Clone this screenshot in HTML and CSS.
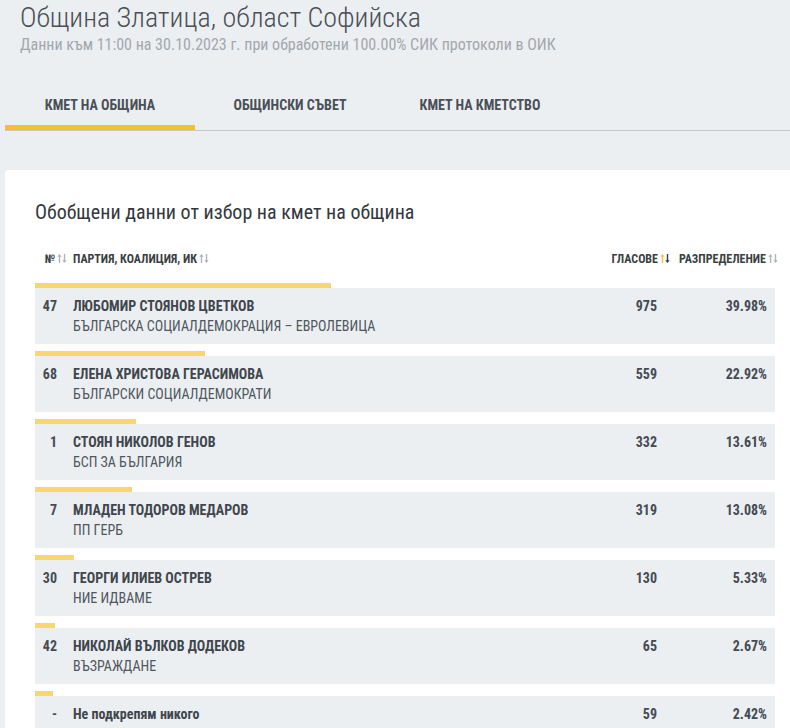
FILE: index.html
```html
<!DOCTYPE html>
<html lang="bg">
<head>
<meta charset="utf-8">
<title>Община Златица</title>
<link rel="stylesheet" href="styles.css">
</head>
<body>
<header class="page-head">
  <h1 class="title">Община Златица, област Софийска</h1>
  <div class="subtitle">Данни към 11:00 на 30.10.2023 г. при обработени 100.00% СИК протоколи в ОИК</div>
</header>
<nav class="tabs">
  <div class="tab active">КМЕТ НА ОБЩИНА</div>
  <div class="tab">ОБЩИНСКИ СЪВЕТ</div>
  <div class="tab">КМЕТ НА КМЕТСТВО</div>
</nav>
<main class="card">
  <h2 class="card-title">Обобщени данни от избор на кмет на община</h2>
  <div class="table">
    <div class="thead">
      <div class="th th-num">№<svg class="sort" viewBox="0 0 10 10"><path d="M2.5 0.5 L0.3 3.3 H1.8 V9.5 H3.2 V3.3 H4.7 Z" fill="#b0b4b8"/><path d="M7.5 9.5 L5.3 6.7 H6.8 V0.5 H8.2 V6.7 H9.7 Z" fill="#b0b4b8"/></svg></div>
      <div class="th th-name">ПАРТИЯ, КОАЛИЦИЯ, ИК<svg class="sort" viewBox="0 0 10 10"><path d="M2.5 0.5 L0.3 3.3 H1.8 V9.5 H3.2 V3.3 H4.7 Z" fill="#b0b4b8"/><path d="M7.5 9.5 L5.3 6.7 H6.8 V0.5 H8.2 V6.7 H9.7 Z" fill="#b0b4b8"/></svg></div>
      <div class="th th-votes">ГЛАСОВЕ<svg class="sort" viewBox="0 0 10 10"><path d="M2.5 0.5 L0.3 3.3 H1.8 V9.5 H3.2 V3.3 H4.7 Z" fill="#f2c43c"/><path d="M7.5 9.5 L5.3 6.7 H6.8 V0.5 H8.2 V6.7 H9.7 Z" fill="#3a3f44"/></svg></div>
      <div class="th th-pct">РАЗПРЕДЕЛЕНИЕ<svg class="sort" viewBox="0 0 10 10"><path d="M2.5 0.5 L0.3 3.3 H1.8 V9.5 H3.2 V3.3 H4.7 Z" fill="#b0b4b8"/><path d="M7.5 9.5 L5.3 6.7 H6.8 V0.5 H8.2 V6.7 H9.7 Z" fill="#b0b4b8"/></svg></div>
    </div>

    <div class="entry">
      <div class="bar" style="width:39.98%"></div>
      <div class="row">
        <div class="num">47</div>
        <div class="who"><div class="name">ЛЮБОМИР СТОЯНОВ ЦВЕТКОВ</div><div class="party">БЪЛГАРСКА СОЦИАЛДЕМОКРАЦИЯ – ЕВРОЛЕВИЦА</div></div>
        <div class="votes">975</div>
        <div class="pct">39.98%</div>
      </div>
    </div>

    <div class="entry">
      <div class="bar" style="width:22.92%"></div>
      <div class="row">
        <div class="num">68</div>
        <div class="who"><div class="name">ЕЛЕНА ХРИСТОВА ГЕРАСИМОВА</div><div class="party">БЪЛГАРСКИ СОЦИАЛДЕМОКРАТИ</div></div>
        <div class="votes">559</div>
        <div class="pct">22.92%</div>
      </div>
    </div>

    <div class="entry">
      <div class="bar" style="width:13.61%"></div>
      <div class="row">
        <div class="num">1</div>
        <div class="who"><div class="name">СТОЯН НИКОЛОВ ГЕНОВ</div><div class="party">БСП ЗА БЪЛГАРИЯ</div></div>
        <div class="votes">332</div>
        <div class="pct">13.61%</div>
      </div>
    </div>

    <div class="entry">
      <div class="bar" style="width:13.08%"></div>
      <div class="row">
        <div class="num">7</div>
        <div class="who"><div class="name">МЛАДЕН ТОДОРОВ МЕДАРОВ</div><div class="party">ПП ГЕРБ</div></div>
        <div class="votes">319</div>
        <div class="pct">13.08%</div>
      </div>
    </div>

    <div class="entry">
      <div class="bar" style="width:5.33%"></div>
      <div class="row">
        <div class="num">30</div>
        <div class="who"><div class="name">ГЕОРГИ ИЛИЕВ ОСТРЕВ</div><div class="party">НИЕ ИДВАМЕ</div></div>
        <div class="votes">130</div>
        <div class="pct">5.33%</div>
      </div>
    </div>

    <div class="entry">
      <div class="bar" style="width:2.67%"></div>
      <div class="row">
        <div class="num">42</div>
        <div class="who"><div class="name">НИКОЛАЙ ВЪЛКОВ ДОДЕКОВ</div><div class="party">ВЪЗРАЖДАНЕ</div></div>
        <div class="votes">65</div>
        <div class="pct">2.67%</div>
      </div>
    </div>

    <div class="entry">
      <div class="bar" style="width:2.42%"></div>
      <div class="row">
        <div class="num">-</div>
        <div class="who"><div class="name">Не подкрепям никого</div><div class="party">&nbsp;</div></div>
        <div class="votes">59</div>
        <div class="pct">2.42%</div>
      </div>
    </div>
  </div>
</main>
</body>
</html>
```

FILE: styles.css
```css
* { box-sizing: border-box; }

html, body {
  margin: 0;
  padding: 0;
}

body {
  background: #eceff2;
  font-family: "Roboto Condensed", "Liberation Sans Narrow", Roboto, sans-serif;
  color: #444b52;
  overflow: hidden;
}

.page-head {
  padding: 1px 20px 0 20px;
}

.title {
  margin: 0;
  font-size: 28px;
  font-weight: 300;
  line-height: 34px;
  color: #4a4f55;
}

.subtitle {
  font-size: 16px;
  line-height: 20px;
  color: #a2a7ac;
}

.tabs {
  display: flex;
  margin: 24px 0 0 5px;
  border-bottom: 1px solid #c6cacf;
}

.tab {
  width: 190px;
  height: 51px;
  padding-top: 18px;
  text-align: center;
  font-size: 14px;
  font-weight: 700;
  color: #4a5057;
}

.tab.active {
  border-bottom: 5px solid #f2c12e;
}

.card {
  margin: 39px 0 0 5px;
  background: #ffffff;
  border-radius: 4px 0 0 0;
  padding: 29px 15px 0 30px;
  min-height: 600px;
}

.card-title {
  margin: 0;
  font-size: 20px;
  font-weight: 400;
  line-height: 26px;
  color: #33383d;
}

.table {
  margin-top: 27px;
}

.thead {
  display: grid;
  grid-template-columns: 30px 1fr 100px 110px;
  font-size: 12px;
  font-weight: 700;
  line-height: 14px;
  color: #3a3f44;
  margin-bottom: 17px;
}

.th {
  display: flex;
  align-items: center;
}

.th-num { justify-content: flex-end; margin-right: -2px; }
.th-name { padding-left: 8px; }
.th-votes { justify-content: flex-end; margin-right: -5px; }
.th-pct { justify-content: flex-end; margin-right: -3px; }

.sort {
  width: 10px;
  height: 11px;
  margin-left: 2px;
  margin-top: -2px;
}

.entry {
  margin-bottom: 7px;
}

.bar {
  height: 5px;
  background: #f7d86f;
}

.row {
  display: grid;
  grid-template-columns: 30px 1fr 100px 110px;
  align-items: start;
  background: #eceff2;
  height: 56px;
  padding-top: 8px;
  font-size: 14px;
  line-height: 20px;
}

.num {
  text-align: right;
  padding-right: 8px;
  font-weight: 700;
}

.who {
  padding-left: 8px;
}

.name {
  font-weight: 700;
  color: #3f464d;
}

.party {
  font-weight: 400;
  color: #4f565d;
}

.votes, .pct {
  text-align: right;
  padding-right: 8px;
  font-weight: 700;
}
```
